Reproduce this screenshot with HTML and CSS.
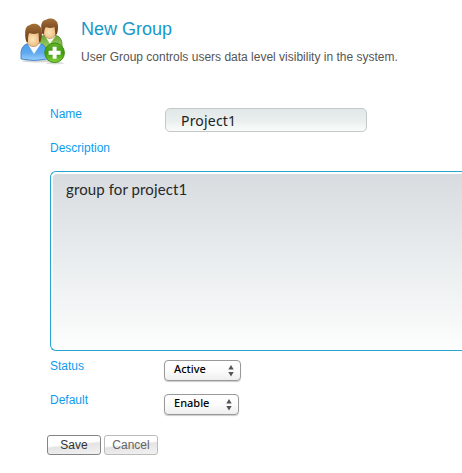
FILE: index.html
```html
<!DOCTYPE html>
<html lang="en">
<head>
<meta charset="utf-8">
<title>New Group</title>
<link rel="stylesheet" href="styles.css">
</head>
<body>
<main class="page">
  <header class="header">
    <svg class="group-icon" width="48" height="48" viewBox="0 0 48 48" aria-hidden="true">
      <defs>
        <linearGradient id="blue" x2="0" y2="1"><stop stop-color="#4f9ce8"/><stop offset=".55" stop-color="#5fa9ee"/><stop offset="1" stop-color="#9ad0fb"/></linearGradient>
        <linearGradient id="green" x2="0" y2="1"><stop stop-color="#6aa536"/><stop offset="1" stop-color="#a5d46b"/></linearGradient>
        <radialGradient id="skin" cx=".45" cy=".6" r=".6"><stop stop-color="#ffe5b8"/><stop offset="1" stop-color="#e3ae72"/></radialGradient>
        <linearGradient id="hair" x2="0" y2="1"><stop stop-color="#a36f3a"/><stop offset=".4" stop-color="#8a5829"/><stop offset="1" stop-color="#673c17"/></linearGradient>
        <linearGradient id="badge" x2="0" y2="1"><stop stop-color="#65b52c"/><stop offset=".5" stop-color="#3d9b0d"/><stop offset="1" stop-color="#8ad33f"/></linearGradient>
      </defs>
      <ellipse cx="17" cy="43" rx="15" ry="1.5" fill="#d4d4d4"/>
      <ellipse cx="35" cy="45.2" rx="9" ry="1.2" fill="#ddd"/>
      <path d="M18 32V22Q19 18 24 17.5H36Q41 18.5 42 25V31H20Z" fill="url(#green)" stroke="#568c2b" stroke-width=".8"/>
      <path d="M25 18L30 26L35.5 18Z" fill="#f5faee"/>
      <path d="M22.5 10C22.5 3 37 3 37 10C37 16 34 20.5 29.8 20.5C25.5 20.5 22.5 16 22.5 10Z" fill="url(#skin)" stroke="#b97d43" stroke-width=".6"/>
      <path d="M22.5 16C20 9 21 2.5 26 1.8C29-.2 33 .3 35 2C39 4 38.5 11 37 16L35.5 17L34.5 9Q30 11 26 9Q24 11 24 16.5Z" fill="url(#hair)"/>
      <path d="M1 41V34Q2 27 8 25.5H20Q26 27 27.5 34V41Q14 44 1 41Z" fill="url(#blue)" stroke="#3179bf" stroke-width=".8"/>
      <path d="M7.5 25.5L14 36L21 25.5Z" fill="#f8fbff"/>
      <path d="M5.7 17.5C5.7 8.5 21 8.5 21 17.5C21 24 18 28.5 13.4 28.5C8.8 28.5 5.7 24 5.7 17.5Z" fill="url(#skin)" stroke="#ba7c42" stroke-width=".7"/>
      <path d="M6.3 23.5C4.5 15 4.5 8 9.5 7.3C13 5 17 5.5 19 7.5C23 10 22.5 18 20.5 23.5L19 24L18.5 15Q14 17 9.5 15Q7.7 17 8 24Z" fill="url(#hair)"/>
      <circle cx="34.6" cy="34.8" r="9.8" fill="url(#badge)" stroke="#388c0d" stroke-width="1"/>
      <path d="M32.6 28.8H36.6V32.8H40.6V36.8H36.6V40.8H32.6V36.8H28.6V32.8H32.6Z" fill="#fff"/>
    </svg>
    <div class="heading">
      <h1 class="title">New Group</h1>
      <p class="subtitle">User Group controls users data level visibility in the system.</p>
    </div>
  </header>
  <form class="form">
    <div class="row name-row">
      <label class="label" for="name">Name</label>
      <input class="name-input" id="name" value="Project1">
    </div>
    <label class="label description-label" for="description">Description</label>
    <div class="description-frame">
      <textarea class="description" id="description" spellcheck="false">group for project1</textarea>
    </div>
    <div class="row select-row">
      <span class="label">Status</span>
      <button class="picker picker-status" type="button">Active
        <svg class="arrows" width="6" height="12" viewBox="0 0 6 12"><path d="M3 0L5.7 4.5H.3ZM.3 7H5.7L3 11.5Z" fill="#555"/></svg>
      </button>
    </div>
    <div class="row select-row">
      <span class="label">Default</span>
      <button class="picker picker-default" type="button">Enable
        <svg class="arrows" width="6" height="12" viewBox="0 0 6 12"><path d="M3 0L5.7 4.5H.3ZM.3 7H5.7L3 11.5Z" fill="#555"/></svg>
      </button>
    </div>
    <div class="actions">
      <button class="button save" type="button">Save</button>
      <button class="button cancel" type="button">Cancel</button>
    </div>
  </form>
</main>
</body>
</html>
```
FILE: styles.css
```css
* { box-sizing: border-box; }

body {
  margin: 0;
  background: #fff;
  font: 12px/14px "Liberation Sans", Arial, sans-serif;
}

.page { padding: 18px 0 0 20px; }

.header { display: flex; height: 90px; }
.group-icon { flex: none; }
.heading { padding-left: 13px; }
.title {
  margin: 0;
  font-size: 18px;
  line-height: 22px;
  font-weight: normal;
  color: #1898c8;
}
.subtitle {
  margin: 10px 0 0;
  color: #555;
  white-space: nowrap;
}

.form { padding-left: 30px; }
.row { display: flex; align-items: flex-start; }
.label { width: 114px; color: #0c9cf0; }
.name-row { height: 33px; }
.name-row .label { width: 115px; margin-top: -1px; }

.name-input {
  width: 202px;
  height: 24px;
  padding: 1px 15px 1px;
  border: 1px solid #c5c8c8;
  border-radius: 5px;
  background: linear-gradient(#e2e7e7, #e8eeed 50%, #fafcfb);
  color: #222;
  font: 14px/20px "Noto Sans", sans-serif;
  letter-spacing: .2px;
}

.description-label { display: block; height: 30px; }

.description-frame {
  height: 180px;
  padding: 2px 0 2px 2px;
  border: 1px solid #26a5d0;
  border-right: 0;
  border-radius: 6px 0 0 6px;
}
.description {
  display: block;
  width: 100%;
  height: 100%;
  padding: 5px 13px;
  border: 0;
  border-radius: 4px 0 0 4px;
  outline: 0;
  resize: none;
  background: linear-gradient(#d8dce0, #fcfefd);
  color: #282828;
  font: 15px/20px Lato, sans-serif;
  letter-spacing: .1px;
}

.select-row { height: 34px; padding-top: 9px; }
.select-row .label { margin-top: -1px; }
.picker {
  display: flex;
  align-items: center;
  justify-content: space-between;
  height: 21px;
  padding: 0 6px 3px 9px;
  border: 1px solid #999;
  border-radius: 4px;
  background: linear-gradient(#fff, #fcfcfc 50%, #eee);
  box-shadow: 0 1px 1px #ccc;
  color: #000;
  font: 500 11px/16px "Noto Sans", sans-serif;
}
.picker-status { width: 77px; }
.picker-default { width: 75px; }
.arrows { position: relative; top: 2px; }

.actions { display: flex; gap: 3px; margin: 16px 0 0 -3px; }
.button {
  width: 54px;
  height: 20px;
  padding: 0;
  border: 1px solid #858585;
  border-radius: 3px;
  background: linear-gradient(174deg, #f2f2f2, #e4e4e4 48%, #fff 56%);
  background: linear-gradient(174deg, #fff 44%, #e4e4e4 52%, #f2f2f2);
  color: #333;
  font: 12px/16px "Liberation Sans", Arial, sans-serif;
}
.cancel { border-color: #bbb; color: #666; }
```
